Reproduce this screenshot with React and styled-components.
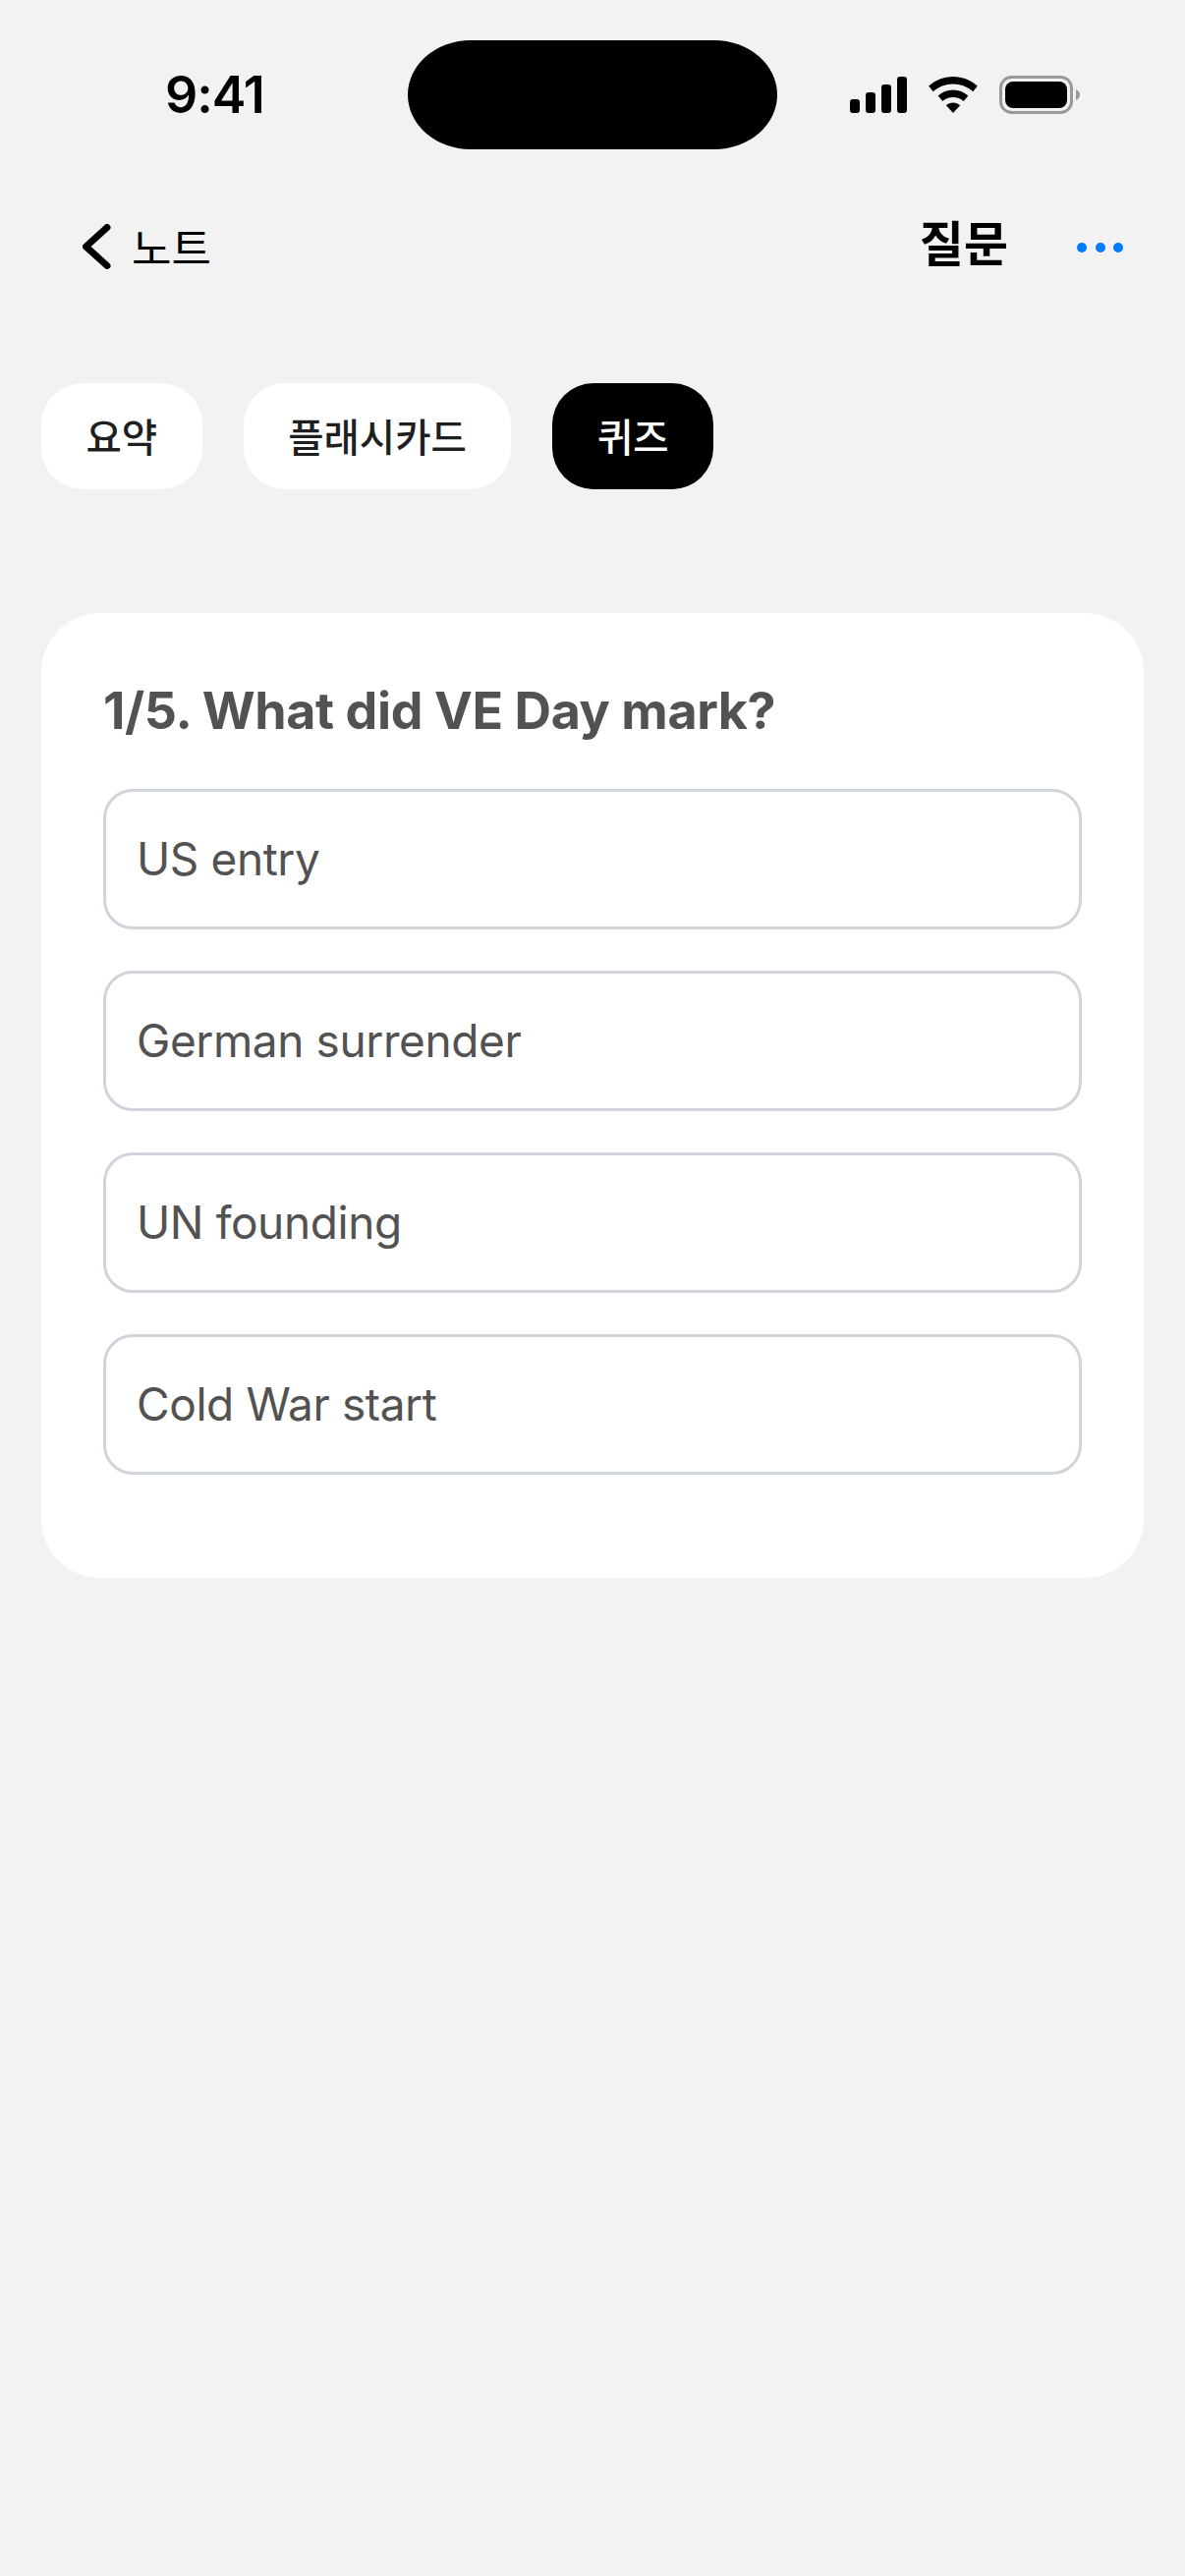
import React from "react";
import styled, { createGlobalStyle } from "styled-components";

const Global = createGlobalStyle`
  html, body { margin: 0; padding: 0; background: #f2f2f2; }
  body { font-family: Inter, "Noto Sans CJK KR", sans-serif; }
`;

const Screen = styled.div`
  width: 1206px;
  height: 2622px;
  background: #f2f2f2;
  overflow: hidden;
`;

const StatusBar = styled.div`
  height: 111px;
  padding-top: 41px;
  display: flex;
  align-items: center;
`;

const Time = styled.div`
  width: 415px;
  padding-left: 168px;
  box-sizing: border-box;
  font-size: 52px;
  font-weight: 600;
  color: #000;
  letter-spacing: -1px;
`;

const Island = styled.div`
  width: 376px;
  height: 111px;
  border-radius: 64px / 55.5px;
  background: #000;
`;

const StatusIcons = styled.div`
  margin-left: 74px;
  display: flex;
  align-items: center;
  gap: 22px;
`;

const NavBar = styled.div`
  margin-top: 67px;
  height: 64px;
  padding: 0 63px 0 84px;
  display: flex;
  align-items: center;
`;

const BackLabel = styled.div`
  margin-left: 21px;
  font-size: 44px;
  color: #000;
  flex: 1;
`;

const NavTitle = styled.div`
  font-size: 49px;
  font-weight: 700;
  color: #000;
  margin-right: 70px;
  margin-bottom: 13px;
`;

const Dots = styled.div`
  display: flex;
  gap: 8.5px;
  margin-top: 1px;
`;

const Dot = styled.span`
  width: 10px;
  height: 10px;
  border-radius: 50%;
  background: #007aff;
`;

const Tabs = styled.div`
  margin-top: 107px;
  padding-left: 42px;
  display: flex;
  gap: 42px;
`;

const Tab = styled.div`
  height: 108px;
  box-sizing: border-box;
  padding: 0 45.5px 3px;
  border-radius: 42px;
  display: flex;
  align-items: center;
  font-size: 39.5px;
  font-weight: 500;
  background: ${(p) => (p.$active ? "#000" : "#fff")};
  color: ${(p) => (p.$active ? "#fff" : "#1f1f1f")};
`;

const Card = styled.div`
  margin: 126px 42px 0;
  height: 982px;
  box-sizing: border-box;
  padding: 70px 63px 0;
  border-radius: 60px;
  background: #fff;
`;

const Question = styled.div`
  font-size: 52px;
  font-weight: 700;
  line-height: 60px;
  letter-spacing: -0.4px;
  color: #525252;
  margin-bottom: 49px;
`;

const Options = styled.div`
  display: flex;
  flex-direction: column;
  gap: 42px;
`;

const Option = styled.div`
  height: 143px;
  box-sizing: border-box;
  padding: 0 0 2px 31px;
  border: 3px solid #d1d5db;
  border-radius: 30px;
  display: flex;
  align-items: center;
  font-size: 46px;
  letter-spacing: -0.4px;
  color: #525252;
`;

const SignalIcon = () => (
  <svg width="58" height="37" viewBox="0 0 58 37" fill="#000">
    <rect x="0" y="23" width="10" height="14" rx="3" />
    <rect x="16" y="16" width="10" height="21" rx="3" />
    <rect x="32" y="8" width="10" height="29" rx="3" />
    <rect x="48" y="0" width="10" height="37" rx="3" />
  </svg>
);

const WifiIcon = () => (
  <svg width="50" height="37" viewBox="0 0 50 37" fill="#000">
    <path d="M25 0C34.5 0 43.2 3.7 49.8 9.6L45.3 15.2C39.9 10.3 32.8 7.4 25 7.4S10.1 10.3 4.7 15.2L.2 9.6C6.8 3.7 15.5 0 25 0Z" />
    <path d="M25 13.5C30.9 13.5 36.2 15.7 40.3 19.4L35.7 25C32.8 22.4 29.1 20.9 25 20.9S17.2 22.4 14.3 25L9.7 19.4C13.8 15.7 19.1 13.5 25 13.5Z" />
    <path d="M25 26.5C27.7 26.5 30.2 27.5 32.1 29.2L25 37 17.9 29.2C19.8 27.5 22.3 26.5 25 26.5Z" />
  </svg>
);

const BatteryIcon = () => (
  <svg width="82" height="39" viewBox="0 0 82 39">
    <rect x="1.5" y="1.5" width="72" height="36" rx="11" fill="none" stroke="#999" strokeWidth="3" />
    <rect x="6" y="6" width="63" height="27" rx="8" fill="#000" />
    <path d="M78 14C80.5 15 82 17 82 19.5S80.5 24 78 25Z" fill="#999" />
  </svg>
);

const BackIcon = () => (
  <svg width="29" height="46" viewBox="0 0 29 46" fill="none">
    <path d="M25 3.5L3.5 23 25 42.5" stroke="#000" strokeWidth="7" strokeLinecap="round" strokeLinejoin="round" />
  </svg>
);

const options = ["US entry", "German surrender", "UN founding", "Cold War start"];

export default function App() {
  return (
    <Screen>
      <Global />
      <StatusBar>
        <Time>9:41</Time>
        <Island />
        <StatusIcons>
          <SignalIcon />
          <WifiIcon />
          <BatteryIcon />
        </StatusIcons>
      </StatusBar>
      <NavBar>
        <BackIcon />
        <BackLabel>노트</BackLabel>
        <NavTitle>질문</NavTitle>
        <Dots>
          <Dot />
          <Dot />
          <Dot />
        </Dots>
      </NavBar>
      <Tabs>
        <Tab>요약</Tab>
        <Tab>플래시카드</Tab>
        <Tab $active>퀴즈</Tab>
      </Tabs>
      <Card>
        <Question>1/5. What did VE Day mark?</Question>
        <Options>
          {options.map((o) => (
            <Option key={o}>{o}</Option>
          ))}
        </Options>
      </Card>
    </Screen>
  );
}
